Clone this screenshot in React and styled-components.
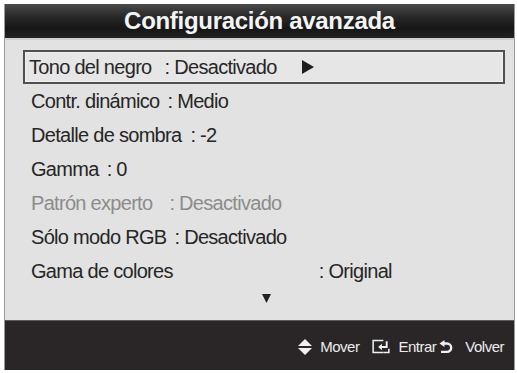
import React from "react";
import styled, { createGlobalStyle } from "styled-components";

const Global = createGlobalStyle`
  html, body { margin: 0; padding: 0; background: #ffffff; }
  body { font-family: "Liberation Sans", Arial, sans-serif; }
  #root { width: 517px; height: 373px; }
`;

const Page = styled.div`
  width: 517px;
  height: 373px;
  box-sizing: border-box;
  padding: 4px 2px 3px 4px;
`;

const Frame = styled.div`
  height: 100%;
  display: flex;
  flex-direction: column;
  border-left: 1px solid #9a9a9a;
  border-right: 1px solid #9a9a9a;
  box-sizing: border-box;
`;

const Header = styled.div`
  height: 34px;
  flex: none;
  display: flex;
  align-items: center;
  justify-content: center;
  background: linear-gradient(#4a4a4a 0%, #2a2a2a 35%, #161616 72%, #232323 100%);
  color: #f4f4f4;
  font-size: 24px;
  font-weight: 700;
  letter-spacing: -0.3px;
  border-bottom: 2px solid #cfcfcf;
`;

const Content = styled.div`
  flex: 1;
  background: #e2e2e2;
  padding: 10px 9px 0 18px;
  display: flex;
  flex-direction: column;
`;

const Row = styled.div`
  height: 34px;
  flex: none;
  box-sizing: border-box;
  display: flex;
  align-items: center;
  padding-left: ${(p) => (p.$selected ? 4 : 6)}px;
  border: ${(p) => (p.$selected ? "2px solid #505050" : "2px solid transparent")};
  box-shadow: ${(p) => (p.$selected ? "inset 0 0 0 1px #f0f0f0" : "none")};
  background: ${(p) => (p.$selected ? "#e6e6e6" : "transparent")};
  color: ${(p) => (p.$disabled ? "#8c8c8c" : "#262626")};
  font-size: 20px;
  letter-spacing: -0.7px;
  white-space: nowrap;
`;

const Label = styled.span`
  flex: none;
`;

const Value = styled.span`
  flex: none;
  margin-left: ${(p) => p.$gap}px;
`;

const RightArrow = styled.svg`
  margin-left: 24px;
  flex: none;
`;

const MoreRow = styled.div`
  height: 20px;
  display: flex;
  align-items: center;
  justify-content: center;
  padding-left: 4px;
`;

const Footer = styled.div`
  height: 50px;
  flex: none;
  background: #2a2627;
  border-top: 1px solid #5a5a5a;
  box-sizing: border-box;
  display: flex;
  align-items: center;
  justify-content: flex-end;
  padding-right: 10px;
  padding-top: 2px;
  color: #ececec;
  font-size: 15px;
  letter-spacing: -0.5px;
`;

const Hint = styled.div`
  display: flex;
  align-items: center;
  margin-left: ${(p) => p.$ml}px;
`;

const HintText = styled.span`
  margin-left: ${(p) => p.$ml}px;
`;

const rows = [
  { label: "Tono del negro", value: ": Desactivado", gap: 13, selected: true },
  { label: "Contr. dinámico", value: ": Medio", gap: 8 },
  { label: "Detalle de sombra", value: ": -2", gap: 9 },
  { label: "Gamma", value: ": 0", gap: 8 },
  { label: "Patrón experto", value: ": Desactivado", gap: 17, disabled: true },
  { label: "Sólo modo RGB", value: ": Desactivado", gap: 8 },
  { label: "Gama de colores", value: ": Original", gap: 146 },
];

export default function App() {
  return (
    <>
      <Global />
      <Page>
        <Frame>
          <Header>Configuración avanzada</Header>
          <Content>
            {rows.map((r) => (
              <Row key={r.label} $selected={r.selected} $disabled={r.disabled}>
                <Label>{r.label}</Label>
                <Value $gap={r.gap}>{r.value}</Value>
                {r.selected && (
                  <RightArrow width="14" height="14" viewBox="0 0 14 14">
                    <polygon points="1,0 13,7 1,14" fill="#1e1e1e" />
                  </RightArrow>
                )}
              </Row>
            ))}
            <MoreRow>
              <svg width="9" height="9" viewBox="0 0 9 9">
                <polygon points="0,0 9,0 4.5,9" fill="#222" />
              </svg>
            </MoreRow>
          </Content>
          <Footer>
            <Hint $ml={0}>
              <svg width="14" height="16" viewBox="0 0 14 16">
                <polygon points="7,0 14,7 0,7" fill="#f0f0f0" />
                <polygon points="0,9 14,9 7,16" fill="#f0f0f0" />
              </svg>
              <HintText $ml={8}>Mover</HintText>
            </Hint>
            <Hint $ml={13}>
              <svg width="18" height="15" viewBox="0 0 19 15">
                <path d="M12 1.2 H1.2 V13.8 H12" fill="none" stroke="#f0f0f0" strokeWidth="1.6" />
                <path d="M12 13.8 H17.8 V10" fill="none" stroke="#f0f0f0" strokeWidth="1.6" />
                <path d="M15.5 2 V8 H10" fill="none" stroke="#f0f0f0" strokeWidth="2" />
                <polygon points="6.5,8 10.5,4.5 10.5,11.5" fill="#f0f0f0" />
              </svg>
              <HintText $ml={8}>Entrar</HintText>
            </Hint>
            <Hint $ml={3}>
              <svg width="14" height="14" viewBox="0 0 14 14">
                <path d="M5 3.5 H8 A4.2 4.2 0 0 1 8 11.9 H2" fill="none" stroke="#f0f0f0" strokeWidth="2.4" />
                <polygon points="0.5,3.5 5.5,0 5.5,7" fill="#f0f0f0" />
              </svg>
              <HintText $ml={12}>Volver</HintText>
            </Hint>
          </Footer>
        </Frame>
      </Page>
    </>
  );
}
